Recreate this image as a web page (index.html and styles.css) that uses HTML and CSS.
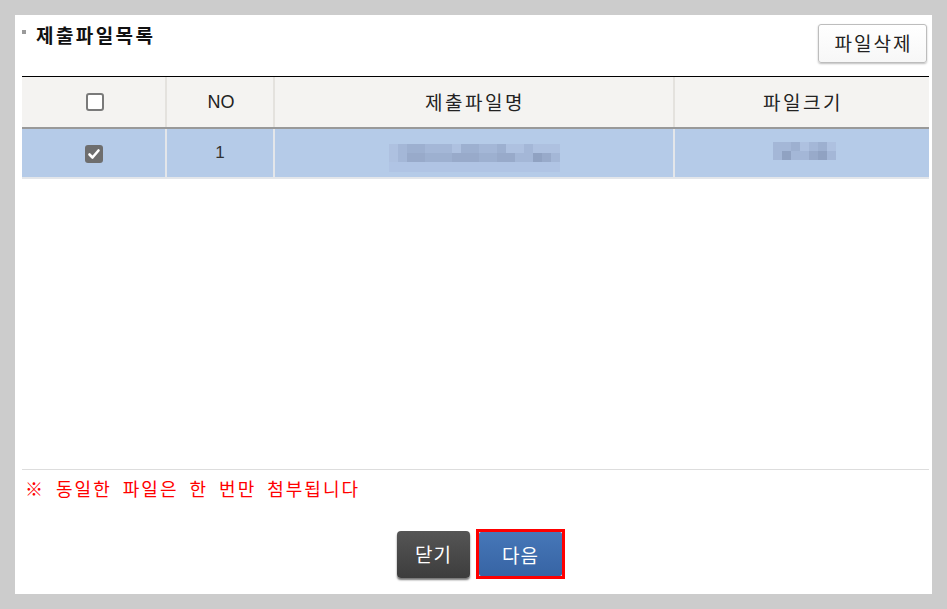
FILE: index.html
```html
<!DOCTYPE html>
<html lang="ko">
<head>
<meta charset="utf-8">
<title>제출파일목록</title>
<link rel="stylesheet" href="styles.css">
</head>
<body>
<div class="panel">
  <div class="top">
    <h2 class="title"><span class="bullet"></span>제출파일목록</h2>
    <button class="btn-del" type="button">파일삭제</button>
  </div>
  <div class="grid">
    <div class="row head">
      <div class="cell"><span class="cb"></span></div>
      <div class="cell no">NO</div>
      <div class="cell">제출파일명</div>
      <div class="cell">파일크기</div>
    </div>
    <div class="row data">
      <div class="cell"><span class="cb checked"><svg viewBox="0 0 18 18" width="18" height="18"><path d="M4.5 9.5 L7.5 12.5 L13.5 5.5" fill="none" stroke="#fff" stroke-width="2.6" stroke-linecap="round" stroke-linejoin="round"/></svg></span></div>
      <div class="cell num">1</div>
      <div class="cell">
        <div class="mosaic name">
          <div class="mrow"><i class="a"></i><i class="b"></i><i class="c"></i><i class="c"></i><i class="b"></i><i class="b"></i><i class="b"></i><i class="a"></i><i class="c"></i><i class="c"></i><i class="b"></i><i class="b"></i><i class="c"></i><i class="a"></i><i class="a"></i><i class="b"></i><i class="a"></i><i class="a"></i><i class="a"></i></div>
          <div class="mrow"><i class="a"></i><i class="b"></i><i class="d"></i><i class="d"></i><i class="c"></i><i class="c"></i><i class="c"></i><i class="d"></i><i class="d"></i><i class="d"></i><i class="c"></i><i class="c"></i><i class="d"></i><i class="d"></i><i class="b"></i><i class="b"></i><i class="e"></i><i class="d"></i><i class="b"></i></div>
          <div class="mrow light"><i></i><i></i><i></i><i></i><i></i><i></i><i></i><i></i><i></i><i></i><i></i><i></i><i></i><i></i><i></i><i></i><i></i><i></i><i></i></div>
        </div>
      </div>
      <div class="cell">
        <div class="mosaic size">
          <div class="mrow"><i class="b"></i><i class="b"></i><i class="c"></i><i class="a"></i><i class="b"></i><i class="c"></i><i class="a"></i></div>
          <div class="mrow"><i class="b"></i><i class="e"></i><i class="b"></i><i class="b"></i><i class="d"></i><i class="e"></i><i class="b"></i></div>
        </div>
      </div>
    </div>
  </div>
  <div class="spacer"></div>
  <p class="notice">※ 동일한 파일은 한 번만 첨부됩니다</p>
  <div class="actions">
    <button class="btn btn-close" type="button">닫기</button>
    <span class="focus"><button class="btn btn-next" type="button">다음</button></span>
  </div>
</div>
</body>
</html>
```

FILE: styles.css
```css
* { box-sizing: border-box; }
html, body { margin: 0; padding: 0; }
body {
  background: #cccccc;
  padding: 15px;
  font-family: "Noto Sans CJK KR", "Liberation Sans", sans-serif;
  color: #222;
}
.panel {
  background: #fff;
  width: 917px;
  height: 579px;
  padding: 0 3px 15px 7px;
  display: flex;
  flex-direction: column;
}
.top {
  height: 61px;
  display: flex;
  justify-content: space-between;
  align-items: flex-start;
}
.title {
  margin: 7px 0 0 0;
  font-size: 19px;
  line-height: 26px;
  font-weight: bold;
  letter-spacing: 2.4px;
  color: #111;
  display: flex;
  align-items: flex-start;
}
.bullet {
  width: 4px;
  height: 4px;
  background: #9a9a9a;
  margin: 8px 10px 0 0;
}
.btn-del {
  margin: 9px 2px 0 0;
  width: 109px;
  height: 39px;
  border: 1px solid #bdbdbd;
  border-radius: 3px;
  background: linear-gradient(#ffffff, #f7f7f7);
  box-shadow: 0 1px 2px rgba(0,0,0,0.25);
  font-family: "Noto Sans CJK KR", sans-serif;
  font-size: 19px;
  letter-spacing: 2px;
  color: #222;
  padding: 0 0 3px 2px;
}
.grid {
  border-top: 1px solid #000;
}
.row {
  display: grid;
  grid-template-columns: 143px 108px 400px 1fr;
}
.cell {
  display: flex;
  align-items: center;
  justify-content: center;
  font-size: 19px;
  letter-spacing: 2.5px;
  color: #222;
}
.cell + .cell { border-left: 2px solid #e4e2de; }
.head {
  height: 52px;
  background: #f4f3f1;
  border-bottom: 2px solid #999;
}
.head .cell { padding-bottom: 2px; padding-left: 2px; }
.no {
  font-family: "Liberation Sans", sans-serif;
  letter-spacing: 0;
  font-size: 18px;
  padding-top: 3px;
}
.data {
  height: 50px;
  background: #b5cbe8;
  border-bottom: 2px solid #e3e6ea;
}
.data .cell + .cell { border-left-color: #e3e6ea; }
.num {
  font-family: "Liberation Sans", sans-serif;
  font-size: 17px;
  letter-spacing: 0;
  color: #333;
}
.cb {
  width: 18px;
  height: 18px;
  border: 2px solid #7a7a7a;
  border-radius: 3px;
  background: #fff;
  display: block;
}
.head .cb { margin-top: 1px; }
.cb.checked {
  border: 0;
  background: #6e6e6e;
  margin-top: 2px;
}
.cb svg { display: block; }
.mosaic { display: flex; flex-direction: column; }
.mosaic.name { margin: 10px 0 0 0; }
.mosaic.size { margin: -4px 0 0 4px; }
.mrow { display: flex; }
.mrow i { display: block; width: 9px; height: 9px; background: #adc1e0; }
.mrow.light i { background: #b0c4e4; height: 10px; }
.mrow i.a { background: #aec1e0; }
.mrow i.b { background: #a4b7d7; }
.mrow i.c { background: #9db0d0; }
.mrow i.d { background: #98aaca; }
.mrow i.e { background: #90a2c2; }
.spacer {
  flex: 1;
  border-bottom: 1px solid #dddddd;
}
.notice {
  margin: 0;
  padding-top: 8px;
  padding-left: 3px;
  height: 28px;
  line-height: 20px;
  font-size: 18px;
  letter-spacing: 2px;
  word-spacing: 4px;
  color: #ff0000;
}
.actions {
  margin-top: 31px;
  height: 50px;
  display: flex;
  justify-content: center;
  align-items: center;
  gap: 6px;
  padding-left: 11px;
}
.btn {
  font-family: "Noto Sans CJK KR", sans-serif;
  font-size: 19px;
  letter-spacing: 1px;
  color: #fff;
  border: 0;
  padding: 0 0 3px 0;
}
.btn-close {
  width: 73px;
  height: 47px;
  margin-top: 1px;
  border-radius: 4px;
  background: linear-gradient(#555555, #3d3d3d);
  box-shadow: 0 2px 2px rgba(0,0,0,0.55);
}
.focus {
  display: block;
  border: 3px solid #ff0000;
  height: 50px;
  width: 89px;
}
.btn-next {
  display: block;
  width: 83px;
  height: 44px;
  background: linear-gradient(#4677b8, #3764a4);
  border-radius: 2px;
  padding-top: 3px;
}
```
